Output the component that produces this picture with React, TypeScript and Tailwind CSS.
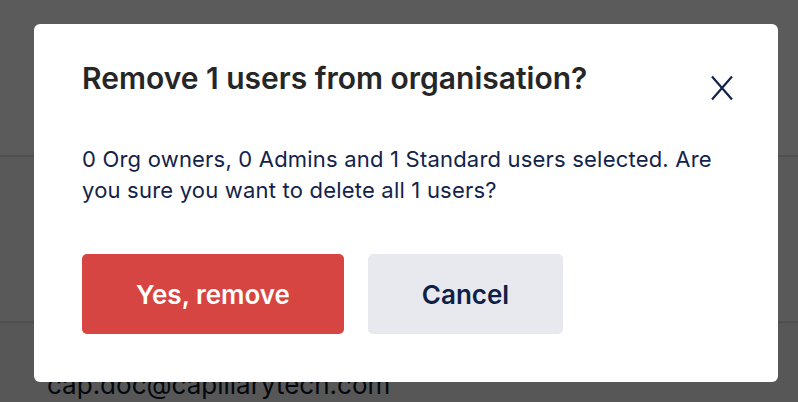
import React from 'react';

const font = { fontFamily: 'Inter, Roboto, "Liberation Sans", sans-serif' };

const CloseIcon = () => (
  <svg width="24" height="26" viewBox="0 0 24 26" fill="none">
    <path d="M2 1.5 L22 24.5 M22 1.5 L2 24.5" stroke="#13234a" strokeWidth="2.2" strokeLinecap="butt" />
  </svg>
);

const RemoveUsersModal = () => (
  <div className="absolute inset-0 bg-black/[0.64]">
    <div className="pl-[34px] pt-[24px]">
      <div className="w-[744px] h-[358px] bg-white rounded-[6px] pl-[48px] pr-[44px] pt-[36px]">
        {/* Header */}
        <div className="flex items-start justify-between">
          <h3 className="text-[30px] leading-[36px] font-semibold text-[#262626]">
            Remove 1 users from organisation?
          </h3>
          <button className="mt-[15px] text-[#13234a]">
            <CloseIcon />
          </button>
        </div>

        <p className="mt-[43px] text-[22px] leading-[31px] tracking-[0.2px] text-[#13234a]">
          0 Org owners, 0 Admins and 1 Standard users selected. Are
          <br />
          you sure you want to delete all 1 users?
        </p>

        {/* Actions */}
        <div className="flex gap-[24px] mt-[48px]">
          <button className="w-[262px] h-[80px] rounded-[5px] bg-[#d64541] text-white text-[26px] font-semibold">
            Yes, remove
          </button>
          <button className="w-[195px] h-[80px] rounded-[5px] bg-[#e8e9ef] text-[#0f2046] text-[26px] font-semibold">
            Cancel
          </button>
        </div>
      </div>
    </div>
  </div>
);

export default function App() {
  return (
    <div className="relative w-[798px] h-[402px] overflow-hidden bg-[#fdfdfd]" style={font}>
      {/* page behind overlay */}
      <div className="h-[157px] border-b-2 border-[#dcdcdc]" />
      <div className="h-[166px] border-b-2 border-[#dcdcdc] bg-[#f6f6f6]" />
      <div className="pl-[47px] pt-[42px] text-[26px] text-[#101827] bg-[#f0f0f0] h-[80px]">
        cap.doc@capillarytech.com
      </div>
      <RemoveUsersModal />
    </div>
  );
}
